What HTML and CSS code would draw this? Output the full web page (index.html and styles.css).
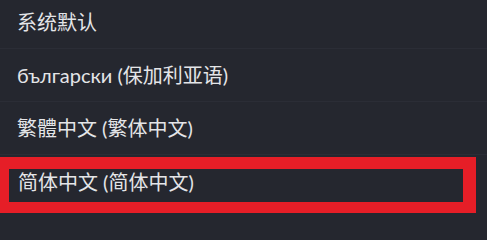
FILE: index.html
```html
<!DOCTYPE html>
<html lang="zh">
<head>
<meta charset="utf-8">
<link rel="stylesheet" href="styles.css">
</head>
<body>
<ul class="lang-list">
  <li class="lang-item">系统默认</li>
  <li class="lang-item">български (保加利亚语)</li>
  <li class="lang-item">繁體中文 (繁体中文)</li>
  <li class="lang-item lang-item--marked">简体中文 (简体中文)</li>
</ul>
</body>
</html>
```
FILE: styles.css
```css
html, body {
  margin: 0;
  padding: 0;
  background: #25272f;
  overflow: hidden;
}
body {
  width: 487px;
  height: 213px;
  font-family: Lato, "Noto Sans CJK SC", sans-serif;
  color: #e4e5e8;
}
.lang-list {
  list-style: none;
  margin: -4px 0 0 0;
  padding: 0;
}
.lang-item {
  box-sizing: border-box;
  height: 53px;
  display: flex;
  align-items: center;
  padding-left: 17px;
  font-size: 20px;
  line-height: 1;
  border-bottom: 1px solid #2b2d36;
}
.lang-item--marked {
  margin-top: 2px;
  height: 56px;
  width: 476px;
  padding-left: 9px;
  padding-bottom: 8px;
  border-style: solid;
  border-color: #e61e27;
  border-width: 12px 13px 11px 9px;
  background: #25272f;
}
```
